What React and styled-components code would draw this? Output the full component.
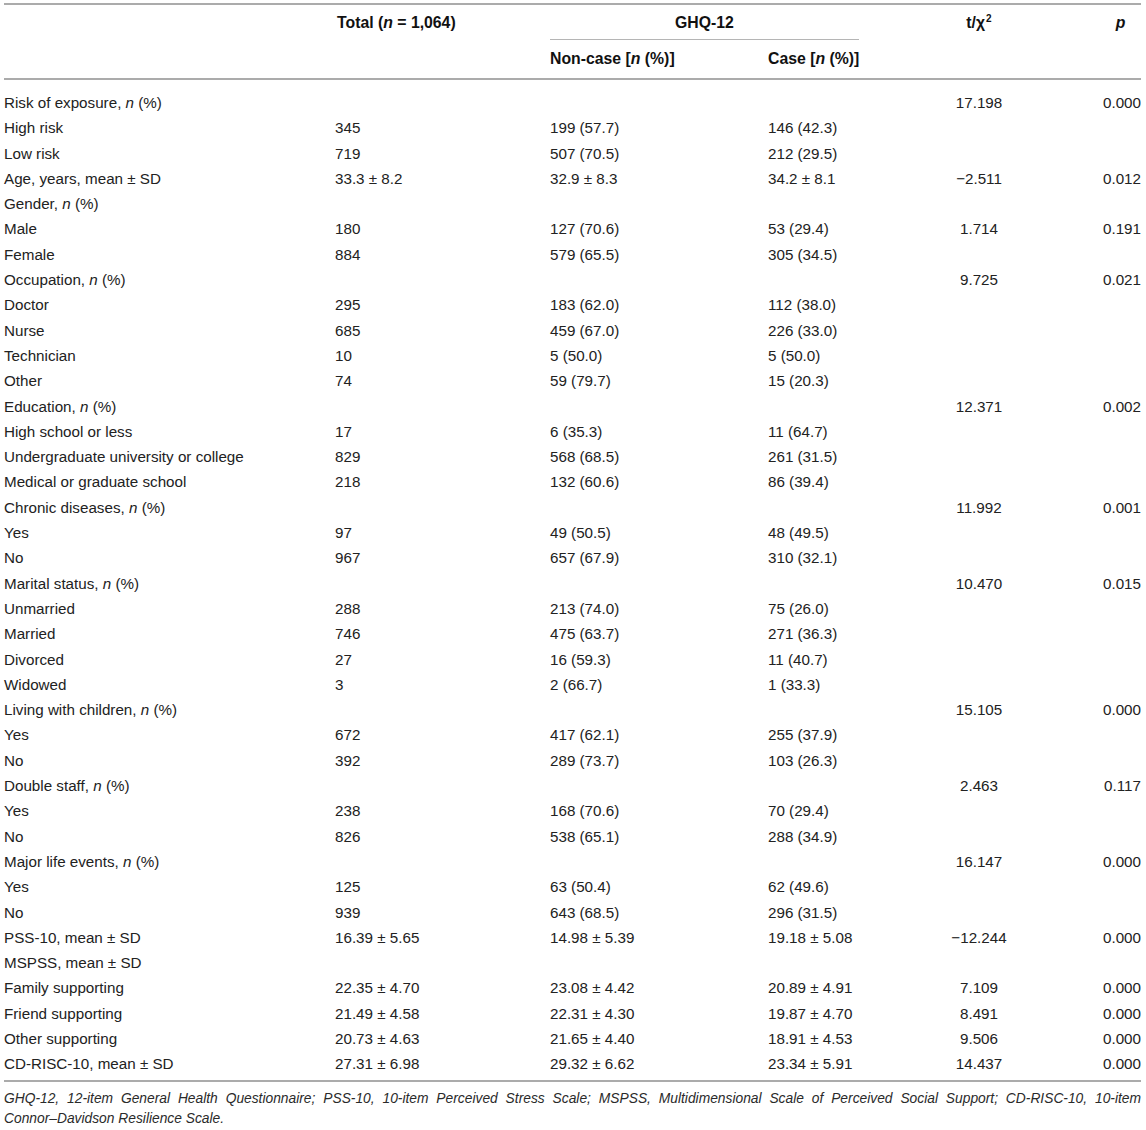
import React from "react";
import styled, { createGlobalStyle } from "styled-components";

const Global = createGlobalStyle`
  html, body { margin: 0; padding: 0; background: #fff; }
  body { font-family: "Liberation Sans", Arial, Helvetica, sans-serif; color: #222; }
`;

const COLS = "333px 213px 218px 90px 242px 41px";

const Page = styled.div`
  width: 1137px;
  margin: 3px 0 0 4px;
  font-size: 15.2px;
`;

const Header = styled.div`
  display: grid;
  grid-template-columns: ${COLS};
  grid-template-rows: 35px 38px;
  border-top: 2px solid #ababab;
  border-bottom: 2px solid #ababab;
  font-weight: bold;
  font-size: 15.8px;
  color: #111;
`;

const HeadCell = styled.div`
  grid-column: ${(p) => p.$col};
  grid-row: ${(p) => p.$row || "1"};
  text-align: ${(p) => p.$align || "left"};
  line-height: 18px;
  padding-top: ${(p) => (p.$row === "2" ? "10px" : "9px")};
  white-space: nowrap;
`;

const GroupHead = styled(HeadCell)`
  border-bottom: 1px solid #b5b5b5;
  margin-right: -1px;
`;

const Sup = styled.sup`
  font-size: 10px;
  vertical-align: 6px;
  line-height: 0;
  margin-left: 1px;
`;

const Body = styled.div`
  padding: 10px 0 3px;
  border-bottom: 2px solid #ababab;
`;

const Row = styled.div`
  display: grid;
  grid-template-columns: ${COLS};
  height: 25.3px;
  line-height: 25.3px;
  white-space: nowrap;
`;

const Cell = styled.div`
  text-align: ${(p) => p.$align || "left"};
  ${(p) => (p.$shift ? `margin-left: ${p.$shift}px;` : "")}
`;

const Note = styled.p`
  margin: 7px 0 0;
  font-size: 13.8px;
  line-height: 20px;
  font-style: italic;
  text-align: justify;
  color: #2a2a2a;
`;

const NoBreak = styled.span`
  white-space: nowrap;
`;

const rows = [
  ["Risk of exposure, n (%)", "", "", "", "17.198", "0.000"],
  ["High risk", "345", "199 (57.7)", "146 (42.3)", "", ""],
  ["Low risk", "719", "507 (70.5)", "212 (29.5)", "", ""],
  ["Age, years, mean ± SD", "33.3 ± 8.2", "32.9 ± 8.3", "34.2 ± 8.1", "\u22122.511", "0.012"],
  ["Gender, n (%)", "", "", "", "", ""],
  ["Male", "180", "127 (70.6)", "53 (29.4)", "1.714", "0.191"],
  ["Female", "884", "579 (65.5)", "305 (34.5)", "", ""],
  ["Occupation, n (%)", "", "", "", "9.725", "0.021"],
  ["Doctor", "295", "183 (62.0)", "112 (38.0)", "", ""],
  ["Nurse", "685", "459 (67.0)", "226 (33.0)", "", ""],
  ["Technician", "10", "5 (50.0)", "5 (50.0)", "", ""],
  ["Other", "74", "59 (79.7)", "15 (20.3)", "", ""],
  ["Education, n (%)", "", "", "", "12.371", "0.002"],
  ["High school or less", "17", "6 (35.3)", "11 (64.7)", "", ""],
  ["Undergraduate university or college", "829", "568 (68.5)", "261 (31.5)", "", ""],
  ["Medical or graduate school", "218", "132 (60.6)", "86 (39.4)", "", ""],
  ["Chronic diseases, n (%)", "", "", "", "11.992", "0.001"],
  ["Yes", "97", "49 (50.5)", "48 (49.5)", "", ""],
  ["No", "967", "657 (67.9)", "310 (32.1)", "", ""],
  ["Marital status, n (%)", "", "", "", "10.470", "0.015"],
  ["Unmarried", "288", "213 (74.0)", "75 (26.0)", "", ""],
  ["Married", "746", "475 (63.7)", "271 (36.3)", "", ""],
  ["Divorced", "27", "16 (59.3)", "11 (40.7)", "", ""],
  ["Widowed", "3", "2 (66.7)", "1 (33.3)", "", ""],
  ["Living with children, n (%)", "", "", "", "15.105", "0.000"],
  ["Yes", "672", "417 (62.1)", "255 (37.9)", "", ""],
  ["No", "392", "289 (73.7)", "103 (26.3)", "", ""],
  ["Double staff, n (%)", "", "", "", "2.463", "0.117"],
  ["Yes", "238", "168 (70.6)", "70 (29.4)", "", ""],
  ["No", "826", "538 (65.1)", "288 (34.9)", "", ""],
  ["Major life events, n (%)", "", "", "", "16.147", "0.000"],
  ["Yes", "125", "63 (50.4)", "62 (49.6)", "", ""],
  ["No", "939", "643 (68.5)", "296 (31.5)", "", ""],
  ["PSS-10, mean ± SD", "16.39 ± 5.65", "14.98 ± 5.39", "19.18 ± 5.08", "\u221212.244", "0.000"],
  ["MSPSS, mean ± SD", "", "", "", "", ""],
  ["Family supporting", "22.35 ± 4.70", "23.08 ± 4.42", "20.89 ± 4.91", "7.109", "0.000"],
  ["Friend supporting", "21.49 ± 4.58", "22.31 ± 4.30", "19.87 ± 4.70", "8.491", "0.000"],
  ["Other supporting", "20.73 ± 4.63", "21.65 ± 4.40", "18.91 ± 4.53", "9.506", "0.000"],
  ["CD-RISC-10, mean ± SD", "27.31 ± 6.98", "29.32 ± 6.62", "23.34 ± 5.91", "14.437", "0.000"],
];

function Label({ text }) {
  const suffix = ", n (%)";
  if (text.endsWith(suffix)) {
    return (
      <>
        {text.slice(0, -suffix.length)}, <i>n</i> (%)
      </>
    );
  }
  return text;
}

export default function App() {
  return (
    <>
      <Global />
      <Page>
        <Header>
          <HeadCell $col="2" $row="1 / span 2">
            Total (<i>n</i> = 1,064)
          </HeadCell>
          <GroupHead $col="3 / span 2" $align="center">
            GHQ-12
          </GroupHead>
          <HeadCell $col="3" $row="2">
            Non-case [<i>n</i> (%)]
          </HeadCell>
          <HeadCell $col="4" $row="2">
            Case [<i>n</i> (%)]
          </HeadCell>
          <HeadCell $col="5" $row="1 / span 2" $align="center">
            t/χ<Sup>2</Sup>
          </HeadCell>
          <HeadCell $col="6" $row="1 / span 2" $align="center">
            <i>p</i>
          </HeadCell>
        </Header>
        <Body>
          {rows.map((r, i) => (
            <Row key={i}>
              <Cell>
                <Label text={r[0]} />
              </Cell>
              <Cell $shift={-2}>{r[1]}</Cell>
              <Cell>{r[2]}</Cell>
              <Cell>{r[3]}</Cell>
              <Cell $align="center">{r[4]}</Cell>
              <Cell $align="right">{r[5]}</Cell>
            </Row>
          ))}
        </Body>
        <Note>
          GHQ-12, 12-item General Health Questionnaire; PSS-10, 10-item Perceived Stress Scale;
          MSPSS, Multidimensional Scale of Perceived Social Support; CD-RISC-10, 10-item{" "}
          <NoBreak>Connor–Davidson</NoBreak> Resilience Scale.
        </Note>
      </Page>
    </>
  );
}
